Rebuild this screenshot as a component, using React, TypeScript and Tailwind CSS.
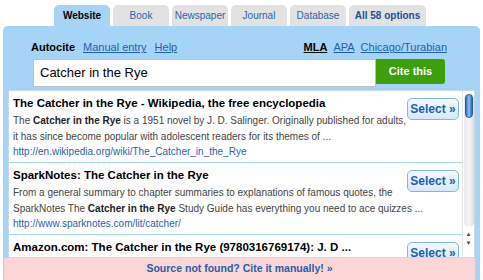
const tabs = [
  { label: 'Website', active: true, w: 'w-[56px]' },
  { label: 'Book', w: 'w-[56px]' },
  { label: 'Newspaper', w: 'w-[56px]' },
  { label: 'Journal', w: 'w-[56px]' },
  { label: 'Database', w: 'w-[56px]' },
  { label: 'All 58 options', bold: true, w: 'w-[77px]' },
];

type Result = {
  title: string;
  desc: React.ReactNode;
  url: string;
};

const results: Result[] = [
  {
    title: 'The Catcher in the Rye - Wikipedia, the free encyclopedia',
    desc: (
      <>
        The <b className="text-[#222]">Catcher in the Rye</b> is a 1951 novel by J. D. Salinger. Originally published for adults,
        <br />
        it has since become popular with adolescent readers for its themes of ...
      </>
    ),
    url: 'http://en.wikipedia.org/wiki/The_Catcher_in_the_Rye',
  },
  {
    title: 'SparkNotes: The Catcher in the Rye',
    desc: (
      <>
        From a general summary to chapter summaries to explanations of famous quotes, the
        <br />
        SparkNotes The <b className="text-[#222]">Catcher in the Rye</b> Study Guide has everything you need to ace quizzes ...
      </>
    ),
    url: 'http://www.sparknotes.com/lit/catcher/',
  },
  {
    title: 'Amazon.com: The Catcher in the Rye (9780316769174): J. D ...',
    desc: null,
    url: '',
  },
];

function SelectButton() {
  return (
    <button className="w-[52px] h-[22px] shrink-0 rounded-[5px] border border-[#7fb6e6] bg-gradient-to-b from-[#f4f9fe] to-[#d6e9fa] text-[12px] font-bold text-[#1d5fae] leading-none whitespace-nowrap">
      Select »
    </button>
  );
}

function Scrollbar() {
  return (
    <div className="absolute right-0 top-0 w-[12px] h-full bg-white border-l border-[#e4e4e4] flex flex-col items-center">
      <div className="mt-[2px] w-[10px] h-[134px] rounded-full bg-gradient-to-r from-[#e8e8e8] via-[#f6f6f6] to-[#dcdcdc] relative">
        <div className="absolute left-[1px] top-[1px] w-[8px] h-[24px] rounded-full bg-gradient-to-r from-[#2f6fc0] via-[#8cc4f2] to-[#2a64b6] border border-[#2b5d9e]" />
      </div>
      <div className="mt-[4px] text-[6px] leading-none text-[#444]">▲</div>
      <div className="mt-[3px] text-[6px] leading-none text-[#444]">▼</div>
    </div>
  );
}

export default function App() {
  return (
    <div className="w-[483px] h-[280px] bg-white overflow-hidden font-['Liberation_Sans',Arial,sans-serif]">
      {/* Tabs */}
      <div className="flex gap-[3px] pl-[54px] pt-[5px] h-[26px]">
        {tabs.map((t) => (
          <div
            key={t.label}
            className={`${t.w} h-[21px] rounded-t-[5px] flex items-center justify-center text-[10px] ${
              t.active
                ? 'bg-[#a6d4f7] font-bold text-black'
                : t.bold
                  ? 'bg-[#e2e2e2] font-bold text-[#1c4f95]'
                  : 'bg-[#e2e2e2] text-[#2a62ad]'
            }`}
          >
            {t.label}
          </div>
        ))}
      </div>

      {/* Panel */}
      <div className="ml-[3px] w-[477px] h-[254px] bg-[#a6d4f7] rounded-t-[5px] flex flex-col">
        <div className="flex items-center justify-between pl-[28px] pr-[33px] pt-[10px] h-[33px] text-[11px]">
          <div className="flex items-center gap-[8px]">
            <span className="font-bold text-black">Autocite</span>
            <span className="underline text-[#1f5fae]">Manual entry</span>
            <span className="underline text-[#1f5fae]">Help</span>
          </div>
          <div className="flex items-center gap-[6px]">
            <span className="font-bold underline text-black">MLA</span>
            <span className="underline text-[#1f5fae]">APA</span>
            <span className="underline text-[#1f5fae]">Chicago/Turabian</span>
          </div>
        </div>

        {/* Search */}
        <div className="flex pl-[30px] h-[31px]">
          <div className="w-[343px] h-[28px] bg-white border border-[#b8c4cc] flex items-center pl-[6px] text-[13px] text-black">
            Catcher in the Rye
          </div>
          <button className="w-[69px] h-[25px] rounded-r-[3px] bg-[#3d9f0e] text-white text-[11px] font-bold">
            Cite this
          </button>
        </div>

        {/* Results */}
        <div className="relative ml-[5px] w-[467px] h-[168px] bg-white border border-[#c9d8e4] overflow-hidden">
          <div className="pr-[12px]">
            {results.map((r, i) => (
              <div
                key={i}
                className={`flex pl-[4px] pr-[3px] pt-[4px] ${
                  i < 2 ? 'h-[72px] border-b border-[#a6d4f7]' : 'h-[40px]'
                }`}
              >
                <div className="flex-1 min-w-0 flex flex-col whitespace-nowrap">
                  <div className="text-[11.5px] font-bold text-black leading-[16px]">{r.title}</div>
                  {r.desc && (
                    <div className="mt-[2px] text-[10px] text-[#444] leading-[16px]">{r.desc}</div>
                  )}
                  {r.url && <div className="text-[10px] text-[#1f5fae] leading-[14px]">{r.url}</div>}
                </div>
                <div className="pt-[1px] shrink-0">
                  <SelectButton />
                </div>
              </div>
            ))}
          </div>
          <Scrollbar />
        </div>

        {/* Footer */}
        <div className="ml-[1px] w-[471px] h-[22px] bg-[#fcd6d6] flex items-center justify-center text-[10.5px] font-bold text-[#1d5fae]">
          Source not found? Cite it manually! »
        </div>
      </div>
    </div>
  );
}
